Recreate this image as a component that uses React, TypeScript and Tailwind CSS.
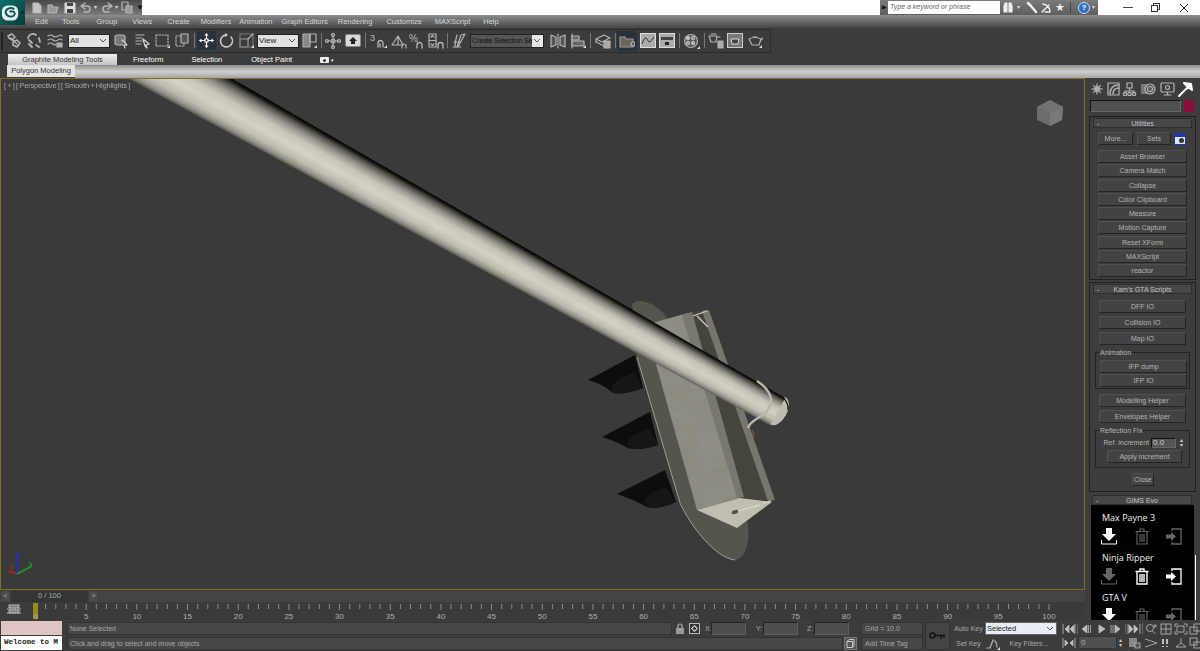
import React from "react";

const F = "font-['Liberation_Sans',Arial,sans-serif]";

type IP = { w?: number; h?: number; c?: string; children: React.ReactNode };
function I({ w = 16, h = 16, c = "", children }: IP) {
  return (
    <svg width={w} height={h} viewBox={`0 0 ${w} ${h}`} className={`shrink-0 ${c}`} fill="none" stroke="#b4b4b4" strokeWidth={1.2} strokeLinecap="round" strokeLinejoin="round">
      {children}
    </svg>
  );
}
const Corner = ({ x = 15, y = 15 }: { x?: number; y?: number }) => <path d={`M${x - 3} ${y}L${x} ${y - 3}L${x} ${y}Z`} fill="#ddd" stroke="none" />;
const Sep = ({ c = "" }: { c?: string }) => <div className={`w-px h-[15px] bg-[#777] shrink-0 ${c}`} />;

function Drop({ label, c, dark = false }: { label: string; c: string; dark?: boolean }) {
  return (
    <div className={`shrink-0 h-[14px] flex items-center border border-[#222] ${c} ${dark ? "bg-[#e8e8e8]" : "bg-[#e2e2e2]"}`}>
      <span className={`flex-1 pl-[1px] leading-none whitespace-nowrap ${dark ? "text-[7px] tracking-[-0.1px] bg-[#555] text-[#111] h-full flex items-center mr-[1px]" : "text-[8px] text-[#222]"}`}>{label}</span>
      <svg width="8" height="6" className="mr-[2px] shrink-0" fill="none" stroke="#555"><path d="M1 1L4 4L7 1" /></svg>
    </div>
  );
}

function Toolbar() {
  return (
    <div className="h-[25px] flex items-center">
      <div className="w-[771px] h-[24px] flex items-center bg-[#3c3c3c] border-y border-r border-[#2a2a2a] pl-[1px] shrink-0">
        <div className="w-[2px] h-[18px] bg-[#222] shrink-0" />
        <I c="ml-[3px]"><path d="M2 3l4-2 3 3-3 3-3-2zM7 9l4-2 3 3-3 4-4-2z" strokeWidth={1.6} /><path d="M5 5l6 6" /></I>
        <I c="ml-[4px]"><path d="M2 5a5 5 0 0 1 8-3M6 14l-3-3M10 12l3 2M13 5l1 4M3 7l3 3" strokeWidth={1.8} /></I>
        <I c="ml-[5px]"><path d="M1 3q3-2 5 0t5 0 4 0M1 7q3-2 5 0t5 0 4 0M1 11q3-2 5 0t3 0" /><rect x="10" y="10" width="5" height="4" fill="#aaa" /></I>
        <Drop label="All" c="ml-[5px] w-[42px]" />
        <I w={15} c="ml-[4px]"><rect x="1" y="2" width="10" height="10" rx="2" fill="#777" /><path d="M8 7l5 5-3 0 1 3" stroke="#ddd" fill="#333" /></I>
        <I c="ml-[6px]"><path d="M1 2h8M1 5h6M1 8h6M1 11h5" /><path d="M8 6l6 5-3 1 1 3-2-2z" fill="#333" stroke="#ddd" /></I>
        <I c="ml-[4px]"><rect x="1" y="2" width="12" height="11" strokeDasharray="1.5 1.5" /><Corner /></I>
        <I c="ml-[4px]"><rect x="1" y="3" width="8" height="10" strokeDasharray="1.5 1.5" /><rect x="6" y="1" width="7" height="9" fill="#555" /></I>
        <Sep c="ml-[3px]" />
        <div className="ml-[2px] w-[19px] h-[19px] bg-[#28323c] flex items-center justify-center shrink-0">
          <I w={15} h={15}><path d="M7.5 1v13M1 7.5h13" stroke="#fff" /><path d="M7.5 0l2 2.5h-4zM7.5 15l2-2.5h-4zM0 7.5l2.5-2v4zM15 7.5l-2.5-2v4z" fill="#fff" stroke="none" /><rect x="6" y="6" width="3" height="3" fill="#28323c" stroke="#fff" /></I>
        </div>
        <I w={15} c="ml-[3px]"><path d="M12 4a6 6 0 1 1-5-2" strokeWidth={1.5} stroke="#ccc" /><path d="M6 0l3 2-3 2z" fill="#ccc" stroke="none" /></I>
        <I w={15} c="ml-[5px]"><rect x="1" y="6" width="8" height="8" stroke="#999" /><rect x="1" y="1" width="13" height="13" stroke="#777" fill="none" /><path d="M9 6l5-5" /><Corner x={15} /></I>
        <Drop label="View" c="ml-[3px] w-[42px]" />
        <I c="ml-[3px]"><rect x="1" y="1" width="7" height="13" fill="#888" stroke="#aaa" /><rect x="8" y="1" width="6" height="8" /><Corner /></I>
        <Sep c="ml-[3px]" />
        <I c="ml-[3px]"><path d="M8 2v12M2 8h12" /><circle cx="8" cy="8" r="2" /><circle cx="8" cy="2" r="1.5" /><circle cx="8" cy="14" r="1.5" /><circle cx="2" cy="8" r="1.5" /><circle cx="14" cy="8" r="1.5" /></I>
        <div className="ml-[4px] w-[16px] h-[13px] bg-[#d8d8d8] border border-[#888] rounded-[2px] flex items-center justify-center shrink-0">
          <svg width="10" height="8"><path d="M5 0L9 4H7V7H3V4H1Z" fill="#222" /></svg>
        </div>
        <Sep c="ml-[4px]" />
        <I w={18} c="ml-[4px]"><text x="0" y="8" fontSize="9" fill="#bbb" stroke="none" fontFamily="Liberation Sans">3</text><path d="M8 14v-4a2.5 2.5 0 0 1 5 0v4M10 14v-3" strokeWidth={1.3} /><Corner x={17} /></I>
        <I w={18} c="ml-[2px]"><path d="M2 12L8 3l5 9zM8 3v9" /><path d="M12 15v-2a2 2 0 0 1 4 0v2" /></I>
        <I w={15} c="ml-[1px]"><text x="0" y="9" fontSize="10" fill="#bbb" stroke="none" fontFamily="Liberation Sans">%</text><path d="M8 15v-3a2.5 2.5 0 0 1 5 0v3" strokeWidth={1.4} /></I>
        <I c="ml-[4px]"><rect x="1" y="1" width="7" height="13" /><path d="M3 4l1.5-1.5L6 4M3 11l1.5 1.5L6 11M1 7.5h7" /><path d="M10 15v-3a2.5 2.5 0 0 1 5 0v3" strokeWidth={1.4} /></I>
        <Sep c="ml-[3px]" />
        <I w={15} c="ml-[4px]"><path d="M3 14c0-4 1-9 2-12M9 2l4-1-6 11-2 2zM2 9h7M1 14h8" /></I>
        <Drop label="Create Selection Se" dark c="ml-[3px] w-[74px]" />
        <I c="ml-[6px]"><path d="M1 2l5 2v8l-5 2zM15 2l-5 2v8l5 2z" fill="#555" /><path d="M8 1v14" strokeDasharray="2 1" /></I>
        <I c="ml-[4px]"><path d="M2 1v14" /><rect x="2" y="3" width="7" height="4" fill="#666" /><rect x="2" y="8" width="12" height="5" fill="#666" /><Corner x={16} /></I>
        <Sep c="ml-[4px]" />
        <I c="ml-[4px]"><path d="M1 6l8-4 6 3-8 4zM1 9l8 4" /><rect x="9" y="8" width="6" height="7" fill="#aaa" /><path d="M1 6v3" /></I>
        <Sep c="ml-[4px]" />
        <div className="ml-[1px] w-[20px] h-[20px] bg-[#28323c] flex items-center justify-center shrink-0">
          <I w={16} h={14}><path d="M1 3h5l1 2h7v8H1z" fill="#6d6658" stroke="#999" /><circle cx="14" cy="10" r="2" fill="#555" /></I>
        </div>
        <div className="ml-[3px] w-[16px] h-[15px] bg-[#ababab] border border-[#ddd] shrink-0 flex items-center justify-center">
          <svg width="14" height="11" fill="none" stroke="#333"><path d="M1 9q3-9 5-5t3 3 4-5" /></svg>
        </div>
        <div className="ml-[3px] w-[16px] h-[15px] bg-[#ababab] border border-[#ddd] shrink-0 flex flex-col items-center justify-center gap-[2px]">
          <div className="w-[12px] h-[3px] bg-[#444]" /><div className="w-[4px] h-[3px] bg-[#222]" />
        </div>
        <Sep c="ml-[4px]" />
        <I w={18} c="ml-[3px]"><circle cx="8" cy="8" r="6.5" fill="#555" /><circle cx="5" cy="5" r="1.6" fill="#ccc" /><circle cx="10" cy="5" r="1.6" fill="#888" /><circle cx="5" cy="10" r="1.6" fill="#999" /><circle cx="10" cy="10" r="1.6" fill="#bbb" /><Corner x={17} y={16} /></I>
        <Sep c="ml-[3px]" />
        <I c="ml-[3px]"><path d="M1 3h8l-1 6H3zM9 4h3M3 1h5" /><rect x="10" y="8" width="5" height="7" fill="#aaa" /></I>
        <div className="ml-[3px] w-[16px] h-[15px] bg-[#777] border border-[#ccc] shrink-0 flex items-center justify-center">
          <svg width="12" height="10" fill="#444" stroke="#ddd"><path d="M2 3h8l-1 5H3z" /></svg>
        </div>
        <I c="ml-[4px]"><path d="M2 6q6-3 12 0l-2 6H5z" /><path d="M6 4h4M14 7l2-2" /><Corner /></I>
      </div>
    </div>
  );
}

function Btn({ children, c = "" }: { children: React.ReactNode; c?: string }) {
  return (
    <div className={`h-[13px] bg-[#434343] border border-t-[#505050] border-l-[#505050] border-b-[#242424] border-r-[#242424] flex items-center justify-center text-[7px] leading-none text-[#b4b4b4] whitespace-nowrap shrink-0 ${c}`}>{children}</div>
  );
}
function Head({ t, c = "" }: { t: string; c?: string }) {
  return (
    <div className={`h-[10px] mx-[3px] bg-[#474747] border border-[#2e2e2e] flex items-center text-[7px] text-[#c4c4c4] leading-none shrink-0 ${c}`}>
      <span className="w-[12px] pl-[3px]">-</span>
      <span className="flex-1 text-center pr-[12px]">{t}</span>
    </div>
  );
}
function Group({ t, c = "", children }: { t: string; c?: string; children: React.ReactNode }) {
  return (
    <div className={`relative mx-[5px] border border-[#222] shrink-0 ${c}`}>
      <span className="absolute -top-[4px] left-[3px] bg-[#3d3d3d] px-[1px] text-[7px] leading-none text-[#b4b4b4]">{t}</span>
      {children}
    </div>
  );
}

const Dl = ({ on }: { on: boolean }) => (
  <svg width="16" height="17" viewBox="0 0 16 17" fill={on ? "#fff" : "#666"}>
    <path d="M5 0h6v6h4l-7 7-7-7h4z" />
    <path d="M0.5 12v4h15v-4" fill="none" stroke={on ? "#fff" : "#666"} />
  </svg>
);
const Tr = ({ on }: { on: boolean }) => (
  <svg width="14" height="17" viewBox="0 0 14 17" fill="none" stroke={on ? "#fff" : "#666"} strokeWidth={on ? 1.4 : 1.1}>
    <path d="M0.5 3.5h13M5 3V1h4v2M2 4v12h10V4M5 6v8M7 6v8M9 6v8" />
  </svg>
);
const Imp = ({ on }: { on: boolean }) => (
  <svg width="16" height="17" viewBox="0 0 16 17" fill="none" stroke={on ? "#fff" : "#666"} strokeWidth={1.3}>
    <path d="M6 3V1h9v15H6v-2" />
    <path d="M0 6.5h5V4l5 4.5L5 13v-2.5H0z" fill={on ? "#fff" : "#666"} stroke="none" />
  </svg>
);
function Gims({ t, a, b, d, c = "" }: { t: string; a: boolean; b: boolean; d: boolean; c?: string }) {
  return (
    <div className={c}>
      <div className="text-[9px] leading-[12px] font-['Open_Sans',sans-serif] font-medium text-[#f0f0f0] pl-[11px]">{t}</div>
      <div className="flex items-start pl-[10px] mt-[4px] h-[17px]">
        <Dl on={a} />
        <div className="ml-[18px]"><Tr on={b} /></div>
        <div className="ml-[17px]"><Imp on={d} /></div>
      </div>
    </div>
  );
}

function CommandPanel() {
  const list = ["Asset Browser", "Camera Match", "Collapse", "Color Clipboard", "Measure", "Motion Capture", "Reset XForm", "MAXScript", "reactor"];
  return (
    <aside className="w-[114px] h-[542px] overflow-hidden flex flex-col bg-[#3d3d3d] ml-px shrink-0">
      <div className="h-[22px] flex items-center pl-[3px] shrink-0">
        <I w={14} h={14} c="ml-[1px]"><path d="M7 2v10M2 7h10M3.5 3.5l7 7M10.5 3.5l-7 7" stroke="#999" strokeWidth={1.5} /><circle cx="7" cy="7" r="3" fill="#aaa" stroke="none" /></I>
        <I w={14} h={14} c="ml-[3px]"><rect x="1" y="1" width="11" height="12" /><path d="M3 12Q3 3 12 3M6 12q0-6 6-6" strokeWidth={1.5} /></I>
        <I w={15} h={14} c="ml-[1px]"><rect x="5" y="1" width="5" height="5" /><path d="M7.5 6v3M3 11V9h9v2" /><circle cx="3" cy="12" r="1.7" /><circle cx="7.5" cy="12" r="1.7" /><circle cx="12" cy="12" r="1.7" /></I>
        <I w={15} h={14} c="ml-[4px]"><rect x="0" y="2" width="6" height="10" fill="#777" stroke="none" /><circle cx="9" cy="7" r="5" fill="#555" /><circle cx="9" cy="7" r="2.5" /></I>
        <I w={15} h={14} c="ml-[4px]"><rect x="1" y="1" width="13" height="9" rx="1" /><circle cx="7.5" cy="5.5" r="2" /><path d="M4 13h7M7.5 10v3" /></I>
        <I w={15} h={15} c="ml-[3px]"><path d="M1 14L10 5M6 1l7 1 1 6-4-3z" stroke="#fff" strokeWidth={2} fill="#fff" /></I>
      </div>
      <div className="flex items-center shrink-0 ml-[4px]">
        <div className="w-[91px] h-[12px] bg-[#505050] border border-t-[#111] border-l-[#111] border-r-[#666] border-b-[#666]" />
        <div className="w-[10px] h-[12px] bg-[#8c0d3c] ml-[3px]" />
      </div>

      <div className="mt-[4px] mx-[3px] w-[107px] border border-[#202020] h-[164px] shrink-0">
        <Head t="Utilities" c="mt-[1px]" />
        <div className="flex items-center mt-[4px] ml-[8px]">
          <Btn c="w-[35px] h-[11px]">More...</Btn>
          <Btn c="w-[34px] h-[11px] ml-[4px]">Sets</Btn>
          <div className="w-[12px] h-[12px] ml-[3px] bg-[#dfe3ef] border border-[#2238a8] flex flex-col items-end">
            <div className="w-full h-[3px] bg-[#2238a8]" />
            <div className="w-[5px] h-[5px] mt-[1px] mr-[1px] bg-[#333] rounded-full" />
          </div>
        </div>
        <div className="mt-[5px] ml-[8px] flex flex-col gap-[1.25px]">
          {list.map((t) => <Btn key={t} c="w-[89px]">{t}</Btn>)}
        </div>
      </div>

      <div className="mt-[2px] mx-[3px] w-[107px] h-[210px] border border-[#202020] flex flex-col shrink-0">
        <Head t="Kam's GTA Scripts" c="mt-[1px]" />
        <Btn c="w-[87px] ml-[9px] mt-[6px]">DFF IO</Btn>
        <Btn c="w-[87px] ml-[9px] mt-[3px]">Collision IO</Btn>
        <Btn c="w-[87px] ml-[9px] mt-[3px]">Map IO</Btn>
        <Group t="Animation" c="mt-[7px] h-[37px] pt-[7px]">
          <Btn c="w-[87px] ml-[4px]">IFP dump</Btn>
          <Btn c="w-[87px] ml-[4px] mt-[1px]">IFP IO</Btn>
        </Group>
        <Btn c="w-[87px] ml-[9px] mt-[5px]">Modelling Helper</Btn>
        <Btn c="w-[87px] ml-[9px] mt-[3px]">Envelopes Helper</Btn>
        <Group t="Reflection Fix" c="mt-[7px] h-[38px] pt-[6px]">
          <div className="flex items-center h-[11px] justify-end pr-[6px] text-[7px] text-[#b4b4b4] leading-none">
            <span>Ref. increment</span>
            <div className="ml-[2px] w-[25px] h-[10px] bg-[#555] border border-t-[#111] border-l-[#111] border-[#666] text-[8px] text-[#ccc] pl-[1px] flex items-center">0.0</div>
            <div className="ml-[3px] text-[6px] text-[#ccc] leading-[5px] w-[4px] flex flex-col items-center"><span>▴</span><span>▾</span></div>
          </div>
          <Btn c="w-[75px] ml-[11px] mt-[2px]">Apply increment</Btn>
        </Group>
        <Btn c="w-[22px] ml-[42px] mt-[5px]">Close</Btn>
      </div>

      <div className="relative mt-[3px] flex-1 min-h-0 flex flex-col">
        <Head t="GIMS Evo" c="ml-[6px] mr-[8px]" />
        <div className="ml-[5px] w-[103px] flex-1 bg-black overflow-hidden pt-[7px]">
          <Gims t="Max Payne 3" a={true} b={false} d={false} />
          <Gims t="Ninja Ripper" a={false} b={true} d={true} c="mt-[7px]" />
          <Gims t="GTA V" a={true} b={false} d={false} c="mt-[7px]" />
        </div>
        <div className="absolute right-[4px] top-[60px] bottom-0 w-px bg-white" />
      </div>
    </aside>
  );
}

const lerp = (a: number, b: number, t: number) => a + (b - a) * t;
const stops: [number, number[]][] = [
  [0, [0, 0, 0]], [0.04, [16, 16, 14]], [0.12, [84, 83, 76]], [0.25, [152, 150, 140]], [0.4, [200, 198, 187]], [0.6, [214, 212, 201]], [0.8, [192, 190, 179]], [0.93, [146, 145, 135]], [1, [88, 87, 82]],
];
function pipeColor(t: number) {
  let i = 0;
  while (i < stops.length - 2 && t > stops[i + 1][0]) i++;
  const [a, ca] = stops[i];
  const [b, cb] = stops[i + 1];
  const k = (t - a) / (b - a);
  return `rgb(${ca.map((v, j) => Math.round(lerp(v, cb[j], k))).join(",")})`;
}

function Scene() {
  const A0 = [231, 78], A1 = [785, 398], B0 = [128, 78], B1 = [770, 425];
  const N = 48;
  const at = (t: number) => [lerp(A0[0], B0[0], t), lerp(A0[1], B0[1], t), lerp(A1[0], B1[0], t), lerp(A1[1], B1[1], t)];
  const strips = Array.from({ length: N }, (_, i) => {
    const t = i / N;
    const u = Math.min(1, t + 2 / N);
    const p = at(t), q = at(u);
    return <polygon key={i} points={`${p[0]},${p[1]} ${p[2]},${p[3]} ${q[2]},${q[3]} ${q[0]},${q[1]}`} fill={pipeColor(t + 0.5 / N)} />;
  });
  return (
    <svg width="1083" height="510" viewBox="1 79 1083 510" className="block">
      <defs>
        <filter id="soft" x="-5%" y="-5%" width="110%" height="110%"><feGaussianBlur stdDeviation="0.6" /></filter>
        <filter id="grain" x="0" y="0" width="100%" height="100%">
          <feTurbulence type="fractalNoise" baseFrequency="0.05 0.09" numOctaves="3" seed="4" />
          <feColorMatrix values="0 0 0 0 0.2  0 0 0 0 0.19  0 0 0 0 0.14  0.9 0 0 0 -0.32" />
          <feComposite in2="SourceGraphic" operator="in" />
        </filter>
      </defs>
      <g filter="url(#soft)">
        <path d="M588 380L635 355L643 388Q625 395 613 393Q605 385 588 380Z" fill="#0a0a0a" />
        <path d="M602 437L650 412L658 445Q640 451 628 448Q618 442 602 437Z" fill="#0a0a0a" />
        <path d="M617 494L665 470L676 502Q658 510 647 507Q635 500 617 494Z" fill="#0a0a0a" />
        <path d="M613 393Q606 382 635 372L643 388Q625 395 613 393ZM628 448Q622 438 650 428L658 445Q640 451 628 448ZM647 507Q638 496 665 487L676 502Q658 510 647 507Z" fill="#151515" />

        <path d="M632 304C640 296 660 305 670 322L745 510C752 535 748 558 735 560C715 558 690 525 680 503L637 357Z" fill="#56554d" />
        <path d="M637 357L680 503C690 525 715 558 735 560" stroke="#b5b4a8" strokeWidth="0.8" fill="none" />
        <polygon points="645,325 688,313 740,498 697,510" fill="#8f8e84" />
        <polygon points="645,325 688,313 740,498 697,510" filter="url(#grain)" opacity="0.5" />
        <polygon points="688,313 707,310 772,502 740,498" fill="#45443e" />
        <polygon points="682,315 692,312 744,497 737,498" fill="#797870" />
        <polygon points="702,311 709,310 775,500 768,501" fill="#77766b" />
        <path d="M693 316L707 311M697 316L708 327" stroke="#cfcdbf" strokeWidth="1.3" fill="none" />
        <polygon points="697,510 737,528 772,502 740,498" fill="#bfbeb0" />
        <ellipse cx="735" cy="512" rx="4" ry="2.5" fill="#56554d" stroke="#ddd" strokeWidth="0.6" transform="rotate(-20 735 512)" />
        <path d="M738 511L760 505M763 503L771 501" stroke="#ddd" strokeWidth="1" />
        <path d="M752 430l2 4-1 3" stroke="#7a5d3a" strokeWidth="1.2" fill="none" />

        <ellipse cx="778" cy="411" rx="9" ry="15.5" transform="rotate(29 778 411)" fill="#bdbbad" />
        <path d="M781 396Q789 402 788 410" stroke="#0a0a0a" strokeWidth="1.2" fill="none" />
        {strips}
        <polygon points="231,78 785,398 770,425 128,78" filter="url(#grain)" opacity="0.12" />
        <path d="M757 381C772 391 775 402 766 412C760 419 751 419 748 428" stroke="#b9b7a9" strokeWidth="2.4" fill="none" />

        <polygon points="1050,100 1063,107 1062,120 1050,126 1037,120 1037,107" fill="#6c6c6c" />
        <polygon points="1050,112 1063,107 1062,120 1050,126" fill="#787878" />
        <polygon points="1050,100 1063,107 1050,112 1037,107" fill="#727272" />
      </g>
      <path d="M17 574V554" stroke="#2a2ad0" strokeWidth="1.6" />
      <path d="M17 574L32 566" stroke="#18a030" strokeWidth="1.6" />
      <path d="M17 574L9 571" stroke="#c02020" strokeWidth="1.6" />
      <text x="17" y="558" fontSize="7" fill="#3030d0" fontFamily="Liberation Sans">z</text>
      <text x="9" y="569" fontSize="7" fill="#c02020" fontFamily="Liberation Sans">x</text>
      <text x="29" y="566" fontSize="7" fill="#20a030" fontFamily="Liberation Sans">y</text>
    </svg>
  );
}

function Track() {
  const ticks = Array.from({ length: 101 }, (_, i) => i);
  return (
    <svg width="1085" height="18" viewBox="0 0 1085 18" className="block shrink-0">
      <rect x="0" y="0" width="1085" height="18" fill="#3a3a3a" />
      <rect x="0" y="0" width="32" height="18" fill="#3c3c3c" />
      <g stroke="#d0d0d0" strokeWidth="0.8">
        <rect x="9" y="3" width="10" height="3" fill="#777" /><rect x="9" y="8" width="10" height="3" fill="#777" />
      </g>
      <path d="M7 7H21M7 11H21" stroke="#ccc" strokeDasharray="1.5 1" />
      <rect x="33" y="1" width="5" height="16" fill="#9a8a1e" />
      <g stroke="#8a8a8a">
        {ticks.map((t) => (t === 0 ? null : <path key={t} d={`M${(35.5 + t * 10.135).toFixed(1)} 2V${t % 5 === 0 ? 8 : 7}`} />))}
      </g>
      <g fontSize="8" fill="#b0b0b0" fontFamily="Liberation Sans" textAnchor="middle">
        <text x="36" y="17">0</text>
        {ticks.filter((t) => t % 5 === 0 && t > 0).map((t) => <text key={t} x={35.5 + t * 10.135} y="17">{t}</text>)}
      </g>
    </svg>
  );
}

const Field = ({ c }: { c: string }) => <div className={`h-[13px] bg-[#4e4e4e] border border-t-[#222] border-l-[#222] border-r-[#5e5e5e] border-b-[#5e5e5e] shrink-0 ${c}`} />;

function NavG({ c = "", children }: { c?: string; children: React.ReactNode }) {
  return <svg width="14" height="12" viewBox="0 0 14 12" className={`shrink-0 ${c}`} fill="#bdbdbd" stroke="#bdbdbd" strokeWidth={0.8}>{children}</svg>;
}

function Bottom() {
  return (
    <div className="h-[31px] flex bg-[#3c3c3c] text-[7px] text-[#a8a8a8] leading-none">
      <div className="w-[61px] ml-px shrink-0 flex flex-col pt-px">
        <div className="h-[14px] bg-[#e0c4c4]" />
        <div className="h-[14px] mt-px bg-white text-[#222] font-['Liberation_Mono',monospace] text-[7.5px] font-bold flex items-center pl-[3px] whitespace-nowrap overflow-hidden">Welcome to M</div>
      </div>
      <div className="ml-[5px] w-[791px] shrink-0 flex flex-col pt-[1px]">
        <div className="flex items-center h-[14px]">
          <div className="w-[605px] h-[13px] bg-[#474747] border border-[#333] flex items-center pl-[2px] shrink-0">None Selected</div>
          <I w={10} h={11} c="ml-[3px]"><rect x="1" y="5" width="8" height="6" fill="#999" stroke="none" /><path d="M3 5V3a2 2 0 0 1 4 0v2" /></I>
          <div className="ml-[4px] w-[11px] h-[11px] bg-[#333] border border-[#bbb] flex items-center justify-center shrink-0"><div className="w-[5px] h-[5px] border border-[#ddd] rotate-45" /></div>
          <span className="ml-[5px] w-[6px]">X:</span>
          <Field c="w-[35px]" />
          <span className="ml-[10px] w-[7px]">Y:</span>
          <Field c="w-[35px]" />
          <span className="ml-[9px] w-[7px]">Z:</span>
          <Field c="w-[35px]" />
        </div>
        <div className="flex items-center h-[14px] mt-px">
          <div className="w-[776px] h-[13px] bg-[#474747] border border-[#333] flex items-center pl-[2px] shrink-0">Click and drag to select and move objects</div>
          <div className="ml-[1px] w-[13px] h-[13px] bg-[#555] border border-[#777] flex items-center justify-center shrink-0">
            <svg width="9" height="9" fill="none" stroke="#ccc"><path d="M1 2.5h5.5v6H1zM1 2.5l2-2h5v6l-1.5 2" /></svg>
          </div>
        </div>
      </div>
      <div className="w-[62px] ml-[3px] shrink-0 flex flex-col pt-[2px]">
        <div className="h-[13px] bg-[#474747] border border-[#333] flex items-center pl-[3px] whitespace-nowrap">Grid = 10.0</div>
        <div className="h-[13px] mt-[2px] bg-[#474747] border border-[#333] flex items-center pl-[3px] whitespace-nowrap">Add Time Tag</div>
      </div>
      <div className="w-[25px] ml-[2px] mt-[2px] h-[28px] bg-[#444] border border-[#333] shrink-0 flex items-center justify-center">
        <svg width="17" height="8" fill="none" stroke="#111" strokeWidth={1.5}><circle cx="3.5" cy="3.5" r="2.5" /><path d="M6 3.5H16M12 3.5V7M15 3.5V6" /></svg>
      </div>
      <div className="ml-[4px] w-[103px] shrink-0 flex flex-col pt-[2px]">
        <div className="flex items-center h-[13px]">
          <div className="w-[29px] text-center whitespace-nowrap">Auto Key</div>
          <div className="ml-[2px] w-[72px] h-[13px] bg-[#e9edf5] border border-[#666] flex items-center text-[#222] pl-px">
            <span className="flex-1 text-[7.5px]">Selected</span>
            <svg width="8" height="6" className="mr-[2px]" fill="none" stroke="#555"><path d="M1 1L4 4L7 1" /></svg>
          </div>
        </div>
        <div className="flex items-center h-[13px] mt-[2px]">
          <div className="w-[29px] text-center whitespace-nowrap">Set Key</div>
          <I w={14} h={12} c="ml-[3px]"><path d="M1 10h3l3-8h1" /><path d="M9 3q2 2 2 6" /><Corner x={14} y={12} /></I>
          <div className="ml-[1px] flex-1 text-center whitespace-nowrap">Key Filters...</div>
        </div>
      </div>
      <div className="ml-[4px] shrink-0 flex flex-col pt-[2px]">
        <div className="flex items-center h-[13px] pl-px">
          <NavG><path d="M1 1V11M13 1V11M12 2L8 6L12 10ZM7 2L3 6L7 10Z" /></NavG>
          <div className="w-px h-[11px] bg-[#666] ml-[1px]" />
          <NavG c="ml-[1px]"><path d="M8 2L3 6L8 10ZM9.5 2V10M11.5 2V10" /></NavG>
          <NavG c="ml-[1px]"><path d="M5 2L11 6L5 10Z" /></NavG>
          <NavG c="ml-[1px]"><path d="M6 2L11 6L6 10ZM2 2V10M4 2V10" /></NavG>
          <div className="w-px h-[11px] bg-[#666] ml-[2px]" />
          <NavG c="ml-[1px]"><path d="M1 1V11M13 1V11M2 2L6 6L2 10ZM7 2L11 6L7 10Z" /></NavG>
          <div className="w-px h-[11px] bg-[#666] ml-[1px]" />
          <NavG c="ml-[1px]"><g fill="none"><circle cx="6" cy="5" r="3.5" /><path d="M8.5 8l3 3M11 1v4M9 3h4" /></g></NavG>
          <NavG c="ml-[1px]"><g fill="none"><rect x="2" y="1" width="10" height="10" /><path d="M2 6h10M7 1v10" /></g></NavG>
          <NavG c="ml-[1px]"><g fill="none"><rect x="3" y="3" width="7" height="6" /><path d="M1 4V1h3M10 1h3v3M13 8v3h-3M4 11H1V8" /></g></NavG>
          <NavG c="ml-[1px]"><g fill="none"><rect x="1" y="4" width="7" height="7" /><rect x="5" y="1" width="8" height="7" /></g></NavG>
        </div>
        <div className="flex items-center h-[13px] mt-px pl-[1px]">
          <NavG><path d="M1 1V11M13 1V11M11 3L8 6L11 9ZM3 3L6 6L3 9Z" /></NavG>
          <div className="ml-[2px] w-[39px] h-[13px] bg-[#505050] border border-[#333] flex items-center pl-[2px] text-[8px] text-[#aaa]">0</div>
          <div className="ml-[2px] w-[5px] text-[6px] leading-[5px] text-[#ccc] flex flex-col"><span>▴</span><span>▾</span></div>
          <NavG c="ml-[3px]"><rect x="2" y="1" width="8" height="9" fill="#888" stroke="none" /><rect x="8" y="6" width="5" height="5" fill="#555" /></NavG>
          <NavG c="ml-[3px]"><g fill="none"><path d="M1 2L13 6L1 10" /></g></NavG>
          <NavG c="ml-[1px]"><path d="M4 2V7M4 9V10M8 2V7M8 9V10" strokeWidth={2} /></NavG>
          <NavG c="ml-[1px]"><g fill="none"><path d="M7 1V6L2 10M7 6L12 10M2 10H12" /></g></NavG>
          <NavG c="ml-[1px]"><g fill="none"><rect x="1" y="1" width="7" height="7" /><rect x="5" y="5" width="7" height="6" /></g></NavG>
        </div>
      </div>
    </div>
  );
}

export default function App() {
  const menus: [string, string][] = [["Edit", "ml-[35px]"], ["Tools", "ml-[14px]"], ["Group", "ml-[17px]"], ["Views", "ml-[15px]"], ["Create", "ml-[15px]"], ["Modifiers", "ml-[11px]"], ["Animation", "ml-[8px]"], ["Graph Editors", "ml-[9px]"], ["Rendering", "ml-[10px]"], ["Customize", "ml-[14px]"], ["MAXScript", "ml-[13px]"], ["Help", "ml-[13px]"]];
  return (
    <div className={`relative w-[1200px] h-[651px] overflow-hidden bg-[#3c3c3c] ${F} select-none`}>
      <div className="h-[15px] bg-white flex items-stretch">
        <div className="w-[25px] shrink-0" />
        <div className="w-[117px] bg-linear-to-b from-[#484848] to-[#7c7c7c] flex items-center pl-[6px] shrink-0">
          <I w={12} h={12}><path d="M2 1h5l3 3v7H2z" fill="#c4c4c4" /></I>
          <I w={13} h={12} c="ml-[4px]"><path d="M1 3h4l1 2h5l-2 6H1z" fill="#999" /></I>
          <I w={12} h={12} c="ml-[4px]"><rect x="1" y="1" width="10" height="10" fill="#ddd" stroke="#ccc" /><rect x="3" y="1" width="6" height="3" fill="#444" stroke="none" /><rect x="3" y="7" width="6" height="4" fill="#444" stroke="none" /></I>
          <I w={12} h={12} c="ml-[4px]"><path d="M5 1L1 4l4 3M1 4h6a3 3 0 0 1 0 6H4" strokeWidth={1.5} /></I>
          <span className="ml-[2px] w-[6px] text-[6px] text-[#ddd]">▾</span>
          <I w={12} h={12} c="ml-[2px]"><path d="M7 1l4 3-4 3M11 4H5a3 3 0 0 0 0 6h3" strokeWidth={1.5} /></I>
          <span className="ml-[2px] w-[6px] text-[6px] text-[#ddd]">▾</span>
          <I w={12} h={13} c="ml-[2px]"><rect x="1" y="1" width="6" height="8" /><rect x="5" y="5" width="6" height="7" fill="#999" /></I>
          <span className="ml-[3px] w-[6px] text-[8px] text-[#111]">▼</span>
        </div>
        <div className="w-[738px] shrink-0" />
        <div className="w-[218px] bg-linear-to-b from-[#7a7a7a] to-[#5e5e5e] flex items-center shrink-0">
          <span className="w-[8px] text-[6px] text-[#111] pl-[2px]">▶</span>
          <div className="w-[112px] h-[13px] bg-white flex items-center pl-[2px] text-[7px] italic text-[#666] whitespace-nowrap">Type a keyword or phrase</div>
          <I w={11} h={12} c="ml-[3px]"><path d="M1 10V4l1-3h2v9zM6 10V1h2l1 3v6z" fill="#eee" stroke="#eee" /></I>
          <span className="ml-[3px] w-[6px] text-[6px] text-[#ddd]">▾</span>
          <I w={13} h={12} c="ml-[2px]"><path d="M3 1l3 3 5 6" stroke="#eee" strokeWidth={2.5} /></I>
          <I w={12} h={12} c="ml-[2px]"><path d="M2 10L9 3M3 2q6 1 7 7M5 10h5" stroke="#eee" strokeWidth={1.5} /></I>
          <span className="ml-[3px] w-[11px] text-[11px] leading-none text-[#eee]">★</span>
          <div className="ml-[4px] w-px h-[11px] bg-[#444]" />
          <div className="ml-[7px] w-[12px] h-[12px] rounded-full bg-[#2a6fc0] border border-[#cde] flex items-center justify-center text-[8px] font-bold text-white">?</div>
          <span className="ml-[2px] w-[6px] text-[6px] text-[#ddd]">▾</span>
        </div>
        <div className="flex-1 flex items-center justify-end">
          <div className="w-[10px] h-px bg-[#444] mr-[18px]" />
          <div className="relative w-[9px] h-[9px] mr-[19px]">
            <div className="absolute right-0 top-0 w-[7px] h-[7px] border border-[#333]" />
            <div className="absolute left-0 bottom-0 w-[7px] h-[7px] border border-[#333] bg-white" />
          </div>
          <svg width="10" height="10" className="mr-[11px]" stroke="#222"><path d="M1 1L9 9M9 1L1 9" /></svg>
        </div>
      </div>

      <div className="h-[13px] bg-linear-to-b from-[#8e8e8e] to-[#464646] flex items-center text-[7.5px] text-[#d4d4d4] leading-none">
        {menus.map(([t, c]) => <span key={t} className={`${c} whitespace-nowrap`}>{t}</span>)}
      </div>

      <Toolbar />

      <div className="h-[12px] flex items-end pl-[8px] text-[7.5px] leading-none text-white">
        <div className="w-[109px] h-[11px] bg-linear-to-b from-[#f0f0f0] to-[#c4c4c4] flex items-center justify-center text-[#333]">Graphite Modeling Tools</div>
        <span className="ml-[16px] mb-[2px]">Freeform</span>
        <span className="ml-[28px] mb-[2px]">Selection</span>
        <span className="ml-[29px] mb-[2px]">Object Paint</span>
        <div className="ml-[28px] mb-[2px] w-[9px] h-[6px] bg-[#eee] rounded-[1px] flex items-center justify-center"><div className="w-[3px] h-[3px] rounded-full bg-[#333]" /></div>
        <span className="ml-[2px] mb-[2px] text-[5px]">▾</span>
      </div>

      <div className="h-[13px] flex">
        <div className="w-[7px] shrink-0" />
        <div className="w-[68px] h-[12px] bg-[#e4e4e4] flex items-center justify-center text-[7.5px] text-[#333] leading-none shrink-0">Polygon Modeling</div>
        <div className="flex-1 bg-linear-to-b from-[#8e8e8e] via-[#d0d0d0] to-[#a4a4a4]" />
      </div>

      <div className="h-[542px] flex">
        <div className="w-[1085px] shrink-0 flex flex-col">
          <div className="relative h-[512px] border border-[#7f7126] bg-[#3a3a3a] overflow-hidden shrink-0">
            <Scene />
            <div className="absolute left-[3px] top-[3px] text-[7.5px] tracking-[-0.2px] [word-spacing:-0.5px] leading-none text-[#a8a8a8] whitespace-nowrap">[ + ] [ Perspective ] [ Smooth + Highlights ]</div>
          </div>
          <div className="h-[12px] flex items-center shrink-0 text-[7.5px] text-[#aaa] leading-none">
            <div className="ml-px w-[9px] h-[11px] bg-[#4a4a4a] flex items-center justify-center">&lt;</div>
            <div className="ml-px w-[77px] h-[11px] bg-[#353535] flex items-center justify-center">0 / 100</div>
            <div className="ml-px w-[9px] h-[11px] bg-[#4a4a4a] flex items-center justify-center">&gt;</div>
            <div className="flex-1 h-[11px] ml-px bg-[#444]" />
          </div>
          <Track />
        </div>
        <CommandPanel />
      </div>

      <Bottom />

      <div className="absolute left-0 top-0 w-[25px] h-[25px] bg-linear-to-br from-[#0e6f6a] to-[#073c3a] flex items-center">
        <svg width="20" height="20" viewBox="0 0 20 20" className="ml-[1px]">
          <rect x="1" y="2" width="17" height="16" rx="6" fill="#e6efee" />
          <path d="M14 6C10 3 4 6 5 10s7 5 9 2-3-5-5-3" fill="none" stroke="#0c5a58" strokeWidth="2" />
        </svg>
        <span className="text-[5px] text-[#111]">▼</span>
      </div>
    </div>
  );
}
